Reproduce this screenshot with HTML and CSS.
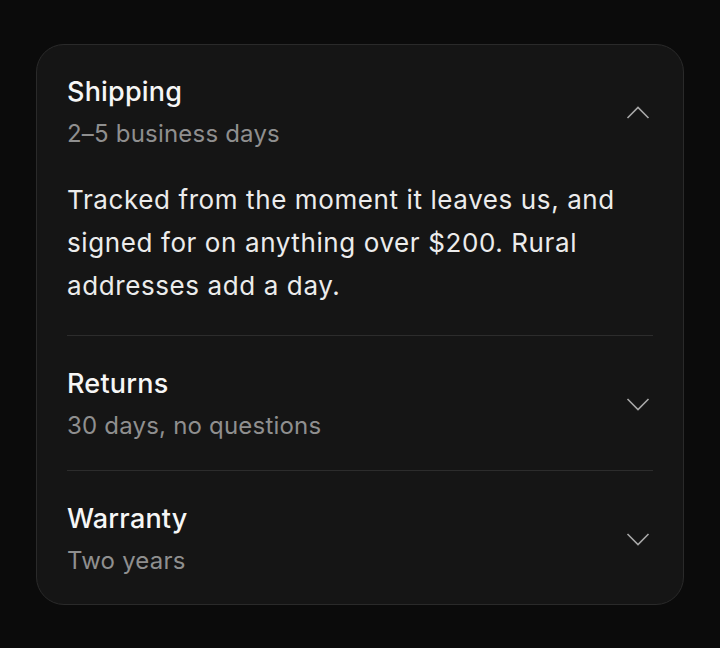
FILE: index.html
```html
<!DOCTYPE html>
<html lang="en">
<head>
    <meta charset="UTF-8">
    <meta name="viewport" content="width=device-width, initial-scale=1.0">
    <title>Delivery details</title>
    <link rel="stylesheet" href="styles.css">
</head>
<body>
<div class="card">
    <div class="item open">
        <div class="item-head">
            <div class="item-text">
                <h2>Shipping</h2>
                <p class="sub">2–5 business days</p>
            </div>
            <svg class="chevron" width="24" height="13" viewBox="0 0 24 13"><path d="M1.5 12 L12 1.5 L22.5 12"/></svg>
        </div>
        <p class="body">Tracked from the moment it leaves us, and signed for on anything over $200. Rural addresses add a day.</p>
    </div>
    <div class="item">
        <div class="item-head">
            <div class="item-text">
                <h2>Returns</h2>
                <p class="sub">30 days, no questions</p>
            </div>
            <svg class="chevron" width="24" height="13" viewBox="0 0 24 13"><path d="M1.5 1 L12 11.5 L22.5 1"/></svg>
        </div>
    </div>
    <div class="item">
        <div class="item-head">
            <div class="item-text">
                <h2>Warranty</h2>
                <p class="sub">Two years</p>
            </div>
            <svg class="chevron" width="24" height="13" viewBox="0 0 24 13"><path d="M1.5 1 L12 11.5 L22.5 1"/></svg>
        </div>
    </div>
</div>
</body>
</html>
```

FILE: styles.css
```css
/* Page */
body {
    margin: 0;
    padding: 44px 36px;
    background-color: #0b0b0b;
    font-family: Inter, "Noto Sans", sans-serif;
}

/* Card */
.card {
    background-color: #151515;
    border: 1px solid #2a2a2a;
    border-radius: 28px;
    padding: 0 30px;
}

/* Accordion items */
.item {
    padding: 31px 0 28px;
    border-top: 1px solid #2c2c2c;
}

.item:first-child {
    padding-top: 30px;
    border-top: none;
}

.item:last-child {
    padding-bottom: 27px;
}

.item-head {
    display: flex;
    align-items: center;
    justify-content: space-between;
}

.item h2 {
    margin: 0;
    color: #f6f6f6;
    font-size: 27px;
    font-weight: 500;
    line-height: 34px;
    letter-spacing: 0.2px;
}

.sub {
    margin: 9px 0 0;
    color: #8f8f8f;
    font-size: 24px;
    line-height: 32px;
    letter-spacing: 0.2px;
}

.chevron {
    margin-right: 3px;
    fill: none;
    stroke: #a8a8a8;
    stroke-width: 1.6;
}

.body {
    margin: 28px 0 0;
    color: #ececec;
    font-size: 26px;
    line-height: 43px;
    letter-spacing: 0.6px;
}
```
